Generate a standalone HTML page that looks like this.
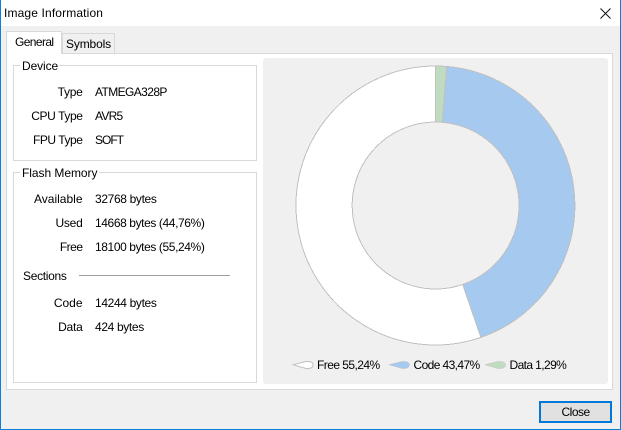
<!DOCTYPE html>
<html><head><meta charset="utf-8"><style>
html,body{margin:0;padding:0;background:#f0f0f0}
#w{position:relative;width:621px;height:430px;overflow:hidden;background:#f0f0f0;font:12px/16px "Liberation Sans",sans-serif;color:#000}
#w div{position:absolute;box-sizing:border-box}
.t{position:absolute;white-space:nowrap}
.r{position:absolute;white-space:nowrap;text-align:right;width:80px;left:2.5px}
</style></head><body><div id="w">
<div style="left:0;top:0;width:621px;height:26px;background:#fff"></div>
<span class="t" style="left:4px;top:5px;letter-spacing:.14px">Image Information</span>
<svg style="position:absolute;left:600px;top:8px" width="11" height="11"><path d="M.5.5L10.5 10.5M10.5.5L.5 10.5" stroke="#111" fill="none"/></svg>
<div style="left:6px;top:53px;width:607px;height:337px;background:#fff;border:1px solid #d9d9d9"></div>
<div style="left:62px;top:33px;width:53px;height:21px;background:#f0f0f0;border:1px solid #d9d9d9"></div>
<div style="left:6px;top:31px;width:56px;height:23px;background:#fff;border:1px solid #d9d9d9;border-bottom:0"></div>
<span class="t" style="left:15px;top:34px;letter-spacing:-.6px">General</span>
<span class="t" style="left:66px;top:36px;letter-spacing:-.15px">Symbols</span>
<div style="left:13px;top:65px;width:244px;height:96px;border:1px solid #d9d9d9"></div>
<div style="left:20px;top:60px;width:39px;height:10px;background:#fff"></div>
<span class="t" style="left:22px;top:58px;letter-spacing:-.1px">Device</span>
<span class="r" style="top:84px;letter-spacing:-.3px">Type</span><span class="t" style="left:95px;top:84px;letter-spacing:-.6px">ATMEGA328P</span>
<span class="r" style="top:108px;letter-spacing:-.4px">CPU Type</span><span class="t" style="left:95px;top:108px;letter-spacing:-.75px">AVR5</span>
<span class="r" style="top:132px;letter-spacing:-.45px">FPU Type</span><span class="t" style="left:95px;top:132px;letter-spacing:-1px">SOFT</span>
<div style="left:13px;top:172px;width:244px;height:211px;border:1px solid #d9d9d9"></div>
<div style="left:20px;top:167px;width:79px;height:10px;background:#fff"></div>
<span class="t" style="left:22px;top:165px;letter-spacing:-.05px">Flash Memory</span>
<span class="r" style="top:191px">Available</span><span class="t" style="left:95px;top:191px;letter-spacing:-.35px">32768 bytes</span>
<span class="r" style="top:215px;letter-spacing:-.25px">Used</span><span class="t" style="left:95px;top:215px;letter-spacing:-.4px">14668 bytes (44,76%)</span>
<span class="r" style="top:239px;letter-spacing:-.5px">Free</span><span class="t" style="left:95px;top:239px;letter-spacing:-.4px">18100 bytes (55,24%)</span>
<span class="t" style="left:23px;top:268px;letter-spacing:-.3px">Sections</span>
<div style="left:79px;top:275px;width:151px;height:1px;background:#a0a0a0"></div>
<span class="r" style="top:295px">Code</span><span class="t" style="left:95px;top:295px;letter-spacing:-.35px">14244 bytes</span>
<span class="r" style="top:319px;letter-spacing:-.25px">Data</span><span class="t" style="left:95px;top:319px;letter-spacing:-.35px">424 bytes</span>
<div style="left:263px;top:58px;width:345px;height:326px;background:#f0f0f0;border-radius:3px"></div>
<svg style="position:absolute;left:0;top:0" width="621" height="430">
<g stroke="#c0c0c0" stroke-width="1" shape-rendering="crispEdges">
<path d="M435.5 66A139.5 139.5 0 1 0 480.9 337.4L462.7 284.5A83.5 83.5 0 1 1 435.5 122Z" fill="#fff"/>
<path d="M446.8 66.5A139.5 139.5 0 0 1 480.9 337.4L462.7 284.5A83.5 83.5 0 0 0 442.3 122.3Z" fill="#a6c9ef"/>
<path d="M435.5 66A139.5 139.5 0 0 1 446.8 66.5L442.3 122.3A83.5 83.5 0 0 0 435.5 122Z" fill="#c0dcc0"/>
</g>
<path d="M293 364.7L306 361.5Q313 361 313 365Q313 369 306 368.5Z" fill="#fff" stroke="#c0c0c0"/>
<path d="M389 364.7L402 361.5Q409.5 361 409.5 365Q409.5 369 402 368.5Z" fill="#a6c9ef" stroke="#c0c0c0" stroke-width=".5"/>
<path d="M485 364.7L498 361.5Q505.5 361 505.5 365Q505.5 369 498 368.5Z" fill="#c0dcc0" stroke="#c0c0c0" stroke-width=".5"/>
</svg>
<span class="t" style="left:317px;top:357px;letter-spacing:-.55px">Free 55,24%</span>
<span class="t" style="left:413.5px;top:357px;letter-spacing:-.6px">Code 43,47%</span>
<span class="t" style="left:509.5px;top:357px;letter-spacing:-.6px">Data 1,29%</span>
<div style="left:539px;top:401px;width:73px;height:22px;background:#e1e1e1;border:2px solid #0078d7"></div>
<span class="t" style="left:561.5px;top:404px;letter-spacing:-.5px">Close</span>
<div style="left:0;top:0;width:621px;height:430px;border:1px solid #0e7fd8;border-top:0"></div>
</div></body></html>
